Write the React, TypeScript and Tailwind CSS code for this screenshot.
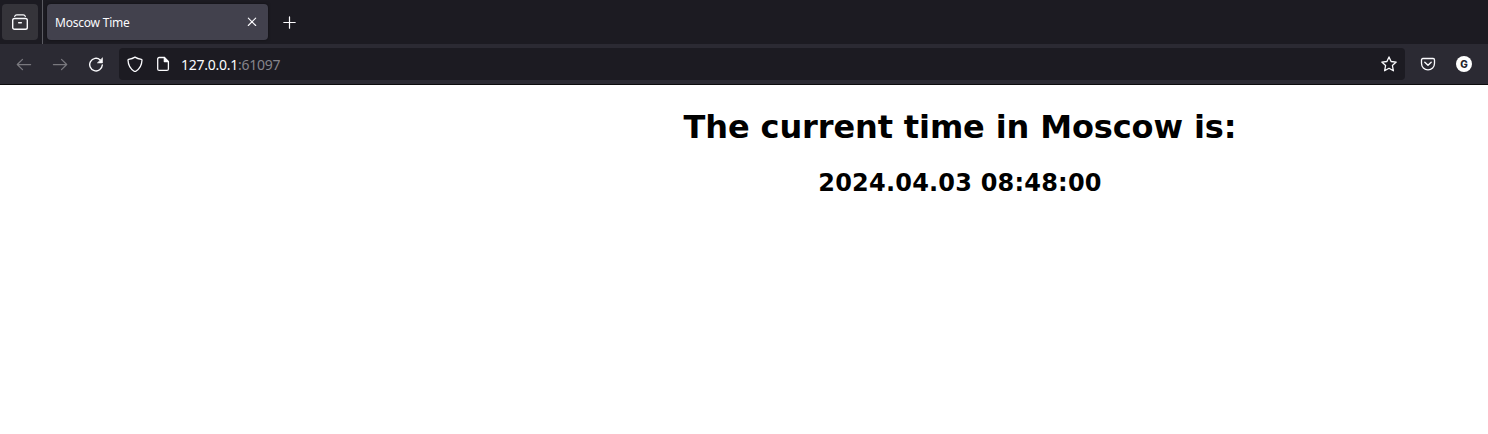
import React from "react";

type IconProps = { children: React.ReactNode; className?: string };

function Icon({ children, className = "" }: IconProps) {
  return (
    <svg
      viewBox="0 0 16 16"
      fill="none"
      stroke="currentColor"
      strokeWidth="1.3"
      strokeLinecap="round"
      strokeLinejoin="round"
      className={`block size-4 shrink-0 ${className}`}
    >
      {children}
    </svg>
  );
}

function TabStrip() {
  return (
    <div className="flex h-11 items-center bg-[#1c1b22] pl-0.5">
      <button
        aria-label="Firefox View"
        className="flex size-9 items-center justify-center rounded bg-[#35343a] text-[#fbfbfe]"
      >
        <Icon>
          <path d="M2.7 2.4C3.1 1.200 3.700.9 4.800.9h6.400c1.100 0 1.700.3 2.100 1.500" />
          <rect x="0.7" y="4.5" width="14.6" height="10.7" rx="1.8" strokeWidth="1.4" />
          <path d="M6.700 8.700h2.600" strokeWidth="1.5" />
        </Icon>
      </button>
      <div className="ml-1 h-11 w-px bg-[#5b5b62]" />
      <div className="ml-1 flex h-9 w-[221px] items-center justify-between rounded bg-[#42414d] pr-2 pl-2 shadow-[0_0_3px_rgba(0,0,0,0.5)]">
        <span className="pt-0.5 text-[12px] leading-4 tracking-[-0.22px] text-[#fbfbfe]">Moscow Time</span>
        <Icon className="text-[#fbfbfe]">
          <path d="M4.3 4.1l7.4 7.4M11.7 4.1l-7.4 7.4" strokeWidth="1.1" />
        </Icon>
      </div>
      <Icon className="ml-[13px] text-[#fbfbfe]">
        <path d="M8.5 2.9v11.3M2.8 8.5h11.4" strokeWidth="1.2" />
      </Icon>
    </div>
  );
}

function Toolbar() {
  return (
    <div className="flex h-[41px] items-center border-b border-[#0c0c0d] bg-[#2b2a33] pl-4 text-[#fbfbfe]">
      <Icon className="text-[#79787e]">
        <path d="M14.6 8.5H1.5M6.5 3.4L1.3 8.5l5.2 5.1" strokeWidth="1.25" />
      </Icon>
      <Icon className="ml-5 text-[#79787e]">
        <path d="M1.4 8.5h13.1M9.5 3.4l5.2 5.1-5.2 5.1" strokeWidth="1.25" />
      </Icon>
      <Icon className="ml-5">
        <path d="M12.200 3.900A6.300 6.300 0 1 0 14.300 9" strokeWidth="1.4" />
        <path d="M14.500 2.100v4.800H9.700z" fill="currentColor" strokeWidth="0.600" />
      </Icon>
      <div className="ml-[15px] flex h-8 w-[1286px] items-center rounded bg-[#1c1b22] pr-2 pl-2">
        <Icon>
          <path d="M8 1.1C6.5 2.1 3.8 3 1.6 3.3c-.4.1-.6.4-.6.8.2 5.2 2.2 8.8 6.1 11.1q.9.5 1.8 0C12.8 12.9 14.8 9.3 15 4.1c0-.4-.2-.7-.6-.8C12.2 3 9.5 2.1 8 1.1z" />
        </Icon>
        <Icon className="ml-3">
          <path d="M9.3 1.500H4.200c-1 0-1.500.5-1.500 1.500v9.900c0 1 .5 1.500 1.500 1.500h7.700c1 0 1.500-.5 1.500-1.500V5.600z" />
          <path d="M9.300 1.500v4.100h4.100z" fill="currentColor" strokeWidth="1.200" />
        </Icon>
        <span className="ml-2.5 grow pt-px text-[14px] leading-5 tracking-[-0.25px]">
          127.0.0.1<span className="text-[#85848b]">:61097</span>
        </span>
        <Icon>
          <path d="M8 .9l2.1 4.6 5.1.6-3.8 3.400 1 5.300L8 12.300l-4.400 2.500 1-5.300L.8 6.100l5.100-.6z" />
        </Icon>
      </div>
      <Icon className="ml-[15px]">
        <path d="M2.9 2.500h10.200c.9 0 1.400.5 1.400 1.400v3.300C14.500 11 11.700 13.800 8 13.800S1.500 11 1.500 7.200V3.900c0-.9.5-1.400 1.400-1.400z" />
        <path d="M4.800 6.200L8 9.200l3.200-3" strokeWidth="1.4" />
      </Icon>
      <div className="ml-5 flex size-4 items-center justify-center rounded-full bg-white font-['Inter',sans-serif] text-[10px] leading-4 font-extrabold text-[#24232b]">
        G
      </div>
    </div>
  );
}

export default function App() {
  return (
    <div className="h-[434px] w-[1488px] overflow-hidden bg-white font-['Noto_Sans','Open_Sans',sans-serif]">
      <TabStrip />
      <Toolbar />
      <main className="flex w-[1920px] flex-col items-center pt-[23px] font-['DejaVu_Sans',sans-serif] font-bold text-black">
        <h1 className="text-[32px] leading-[39px] tracking-[-0.12px]">The current time in Moscow is:</h1>
        <h2 className="mt-[22px] text-[24px] leading-[29px] tracking-[0.2px]">2024.04.03 08:48:00</h2>
      </main>
    </div>
  );
}
